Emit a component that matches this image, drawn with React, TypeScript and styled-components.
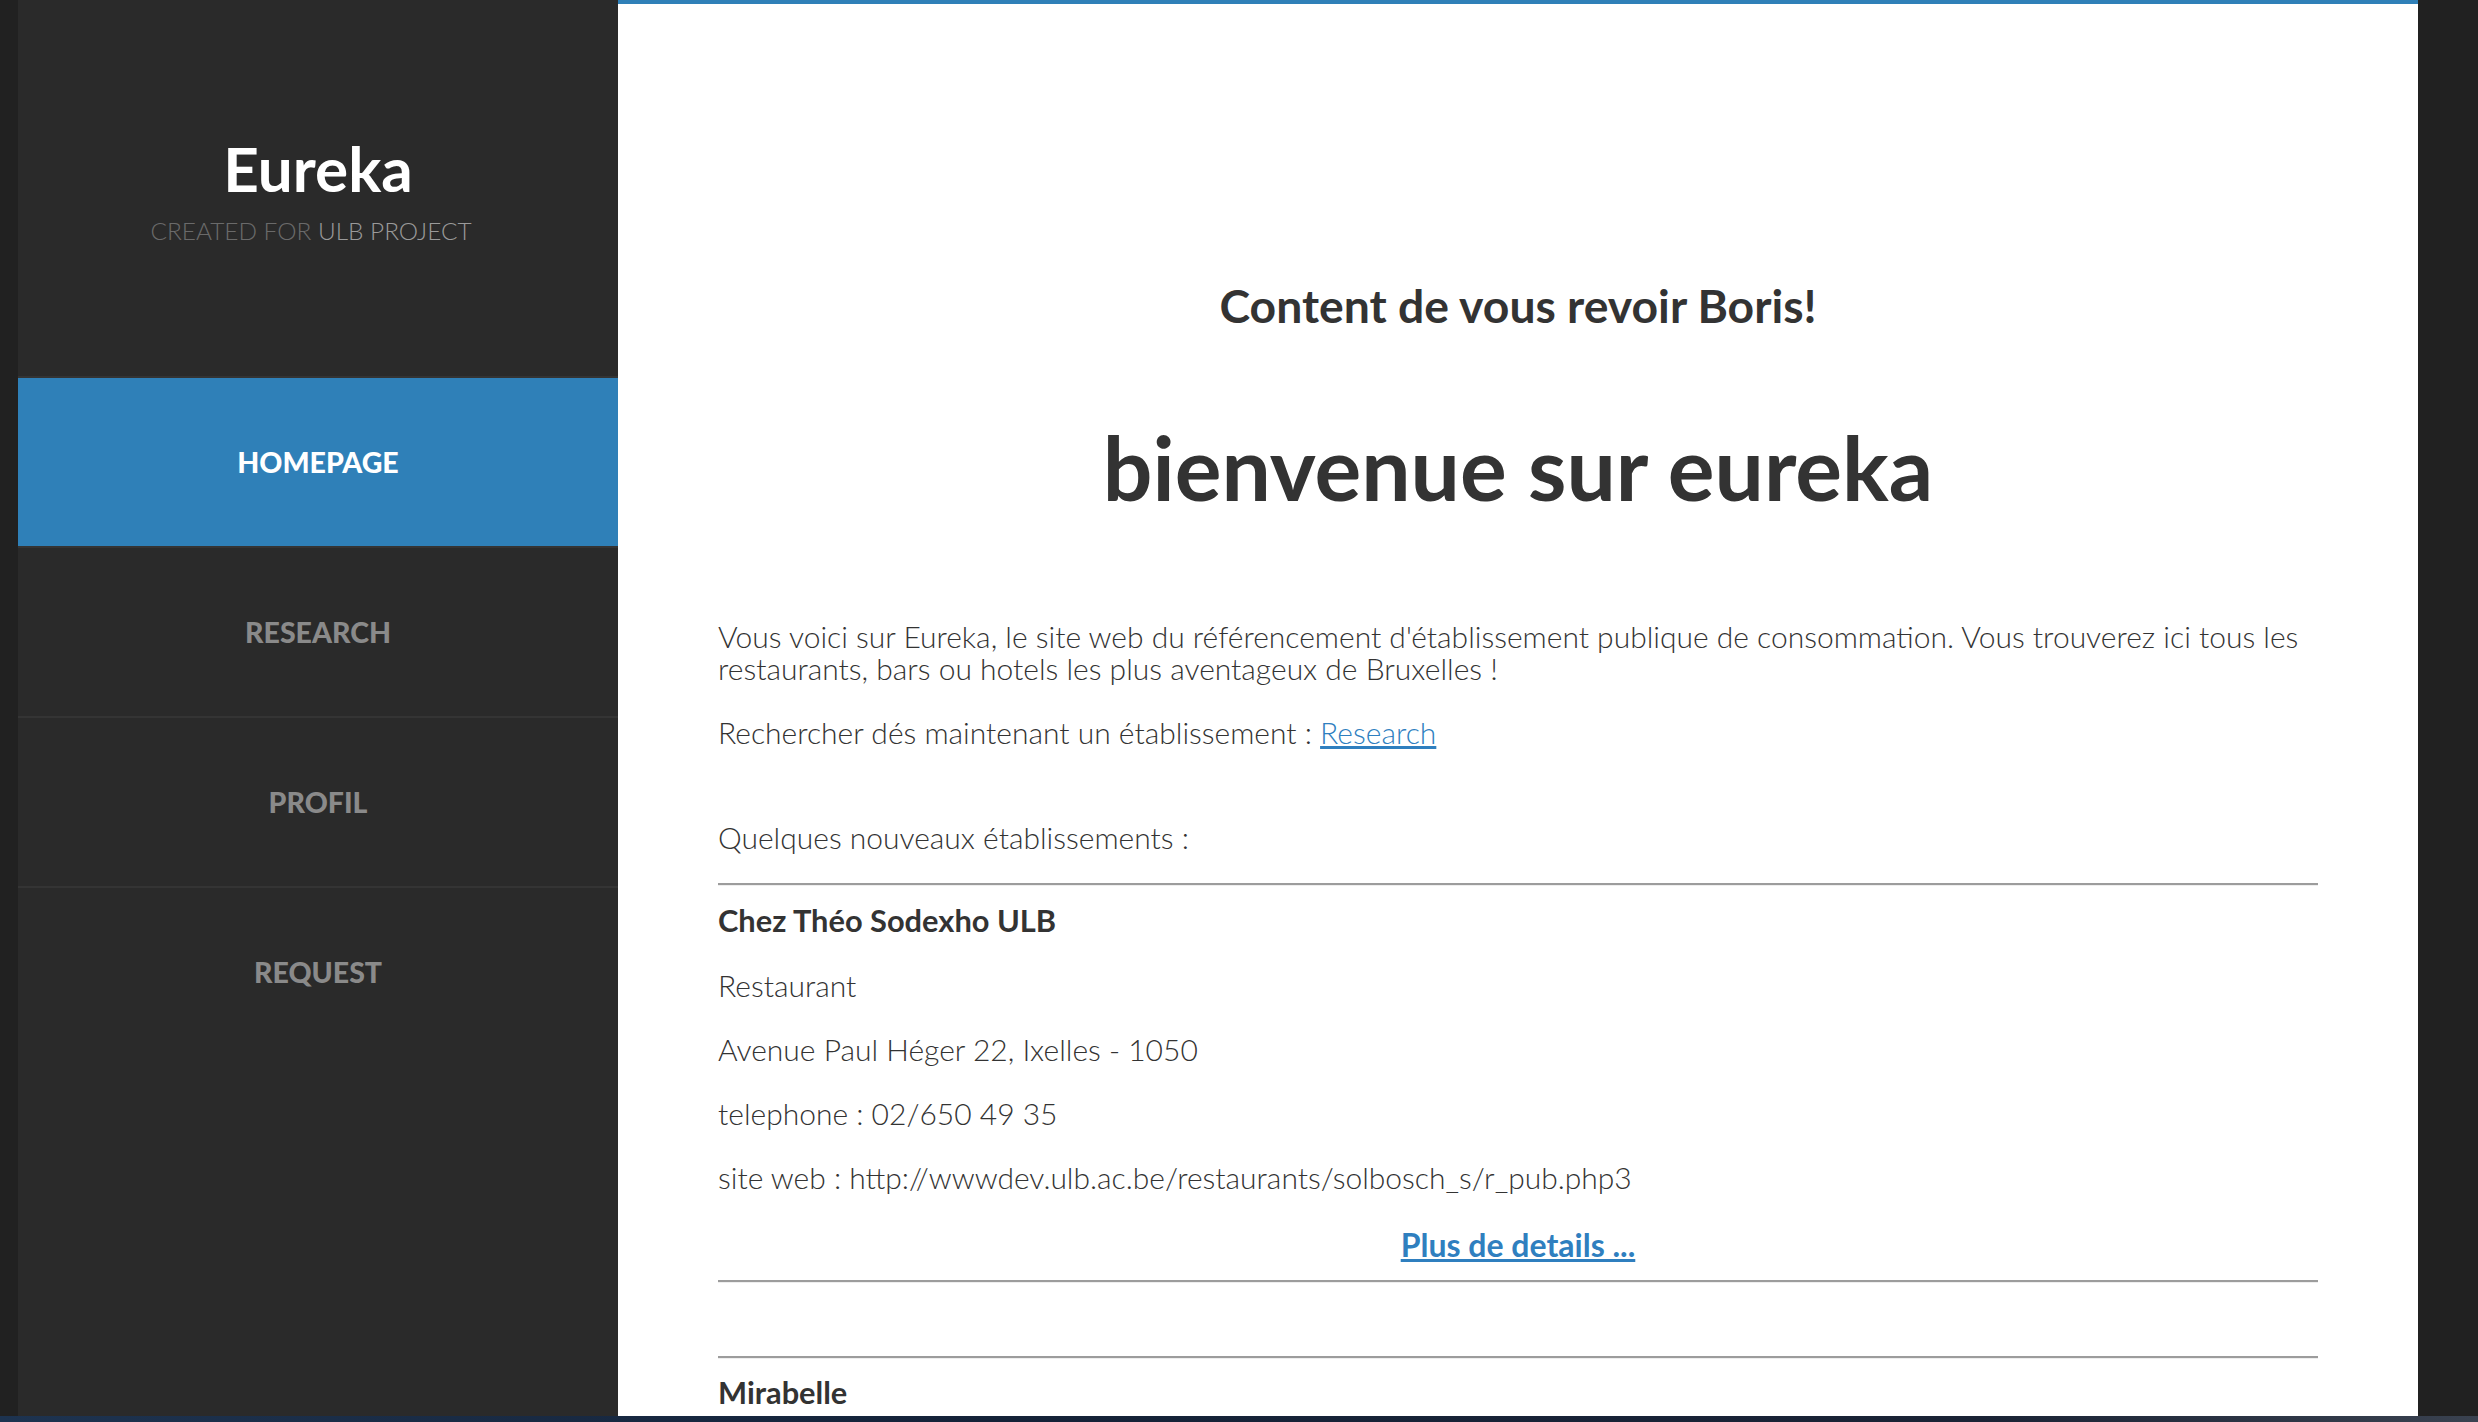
import React from "react";
import styled, { createGlobalStyle } from "styled-components";

const Global = createGlobalStyle`
  html, body { margin: 0; padding: 0; background: #212121; }
  body { font-family: "Lato", "Open Sans", sans-serif; }
  * { box-sizing: border-box; }
`;

const Frame = styled.div`
  width: 2478px;
  height: 1422px;
  display: flex;
  flex-direction: column;
  overflow: hidden;
`;

const Row = styled.div`
  display: flex;
  height: 1416px;
`;

const Edge = styled.div<{ $w: number }>`
  width: ${(p) => p.$w}px;
  flex: none;
  background: #212121;
`;

const Taskbar = styled.div`
  height: 6px;
  background: linear-gradient(90deg, #1d3350, #142238 40%, #1a2335 80%, #3a4250);
`;

const Sidebar = styled.aside`
  width: 600px;
  flex: none;
  background: #2a2a2a;
  display: flex;
  flex-direction: column;
`;

const Brand = styled.div`
  height: 376px;
  display: flex;
  flex-direction: column;
  align-items: center;
  padding-top: 128px;
`;

const BrandTitle = styled.h1`
  margin: 0;
  font-size: 62px;
  line-height: 80px;
  font-weight: 700;
  color: #ffffff;
`;

const BrandSub = styled.div`
  margin-top: 8px;
  padding-right: 14px;
  font-size: 24.4px;
  line-height: 30px;
  font-weight: 300;
  color: #6a6a6a;
  span { color: #9a9a9a; }
`;

const Nav = styled.nav`
  display: flex;
  flex-direction: column;
`;

const NavItem = styled.a<{ $active?: boolean }>`
  height: 170px;
  border-top: 2px solid #343434;
  display: flex;
  align-items: center;
  justify-content: center;
  font-size: 28.5px;
  font-weight: 900;
  text-decoration: none;
  color: ${(p) => (p.$active ? "#ffffff" : "#8a8a8a")};
  background: ${(p) => (p.$active ? "#2f80b8" : "transparent")};
`;

const Main = styled.main`
  width: 1800px;
  flex: none;
  background: #ffffff;
  border-top: 4px solid #2f80b8;
  overflow: hidden;
  padding: 0 100px;
  color: #333333;
`;

const Greeting = styled.h2`
  margin: 274px 0 0;
  text-align: center;
  font-size: 46.3px;
  line-height: 54px;
  font-weight: 700;
`;

const Title = styled.h1`
  margin: 84px 0 0;
  text-align: center;
  font-size: 87.5px;
  line-height: 104px;
  font-weight: 700;
`;

const Para = styled.p<{ $gap: number }>`
  margin: ${(p) => p.$gap}px 0 0;
  font-size: 30px;
  line-height: 32px;
  font-weight: 300;
`;

const Link = styled.a`
  color: #2f7fbf;
  text-decoration: underline;
`;

const Rule = styled.hr<{ $gap: number }>`
  margin: ${(p) => p.$gap}px 0 0;
  border: none;
  border-top: 2px solid #9c9c9c;
  border-bottom: 1px solid #eeeeee;
  height: 0;
`;

const PlaceName = styled.h3<{ $gap: number }>`
  margin: ${(p) => p.$gap}px 0 0;
  font-size: 30.8px;
  line-height: 32px;
  font-weight: 700;
`;

const More = styled.a`
  display: block;
  margin-top: 36px;
  text-align: center;
  font-size: 32px;
  line-height: 32px;
  font-weight: 700;
  color: #2f7fbf;
  text-decoration: underline;
`;

type Place = { name: string; kind: string; address: string; phone: string; site: string };

const places: Place[] = [
  {
    name: "Chez Théo Sodexho ULB",
    kind: "Restaurant",
    address: "Avenue Paul Héger 22, Ixelles - 1050",
    phone: "02/650 49 35",
    site: "http://wwwdev.ulb.ac.be/restaurants/solbosch_s/r_pub.php3",
  },
];

export default function App() {
  return (
    <Frame>
      <Global />
      <Row>
        <Edge $w={18} />
        <Sidebar>
          <Brand>
            <BrandTitle>Eureka</BrandTitle>
            <BrandSub>
              CREATED FOR <span>ULB PROJECT</span>
            </BrandSub>
          </Brand>
          <Nav>
            <NavItem $active href="#">HOMEPAGE</NavItem>
            <NavItem href="#">RESEARCH</NavItem>
            <NavItem href="#">PROFIL</NavItem>
            <NavItem href="#">REQUEST</NavItem>
          </Nav>
        </Sidebar>
        <Main>
          <Greeting>Content de vous revoir Boris!</Greeting>
          <Title>bienvenue sur eureka</Title>
          <Para $gap={100}>
            Vous voici sur Eureka, le site web du référencement d'établissement publique de consommation. Vous
            trouverez ici tous les restaurants, bars ou hotels les plus aventageux de Bruxelles !
          </Para>
          <Para $gap={32}>
            Rechercher dés maintenant un établissement : <Link href="#">Research</Link>
          </Para>
          <Para $gap={73}>Quelques nouveaux établissements :</Para>
          {places.map((pl) => (
            <React.Fragment key={pl.name}>
              <Rule $gap={30} />
              <PlaceName $gap={19}>{pl.name}</PlaceName>
              <Para $gap={32}>{pl.kind}</Para>
              <Para $gap={32}>{pl.address}</Para>
              <Para $gap={32}>telephone : {pl.phone}</Para>
              <Para $gap={32}>site web : {pl.site}</Para>
              <More href="#">Plus de details ...</More>
              <Rule $gap={19} />
            </React.Fragment>
          ))}
          <Rule $gap={73} />
          <PlaceName $gap={18}>Mirabelle</PlaceName>
        </Main>
        <Edge $w={60} />
      </Row>
      <Taskbar />
    </Frame>
  );
}
